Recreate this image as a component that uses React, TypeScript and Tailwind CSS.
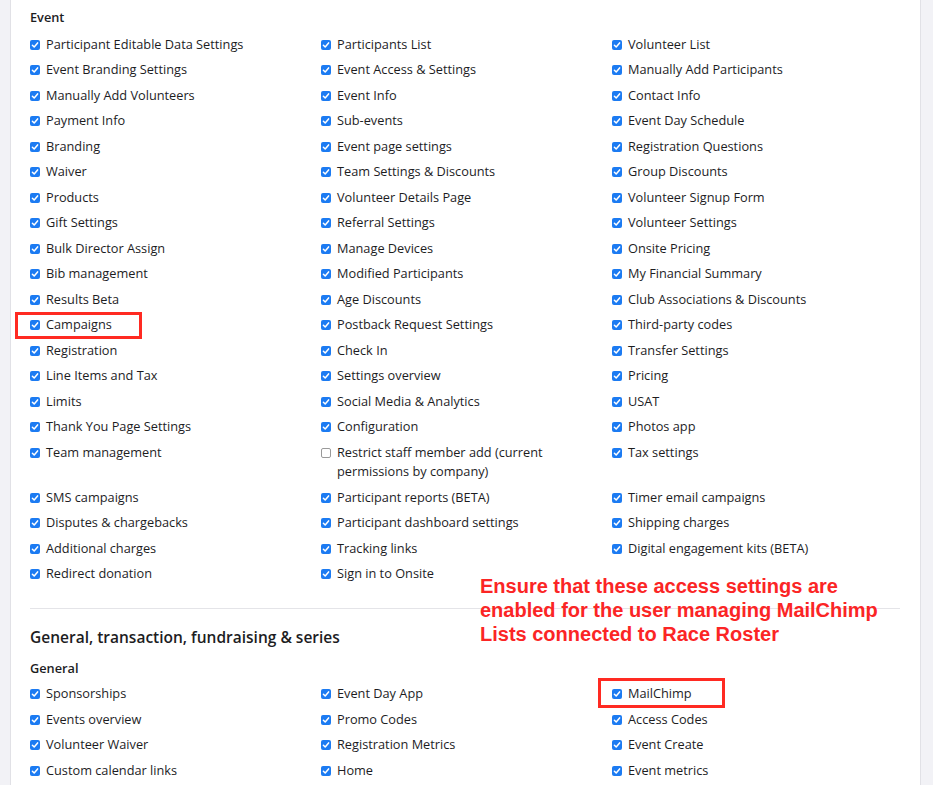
import React from "react";

type Item = { label: string; checked?: boolean; mark?: "campaigns" | "mailchimp" };

const eventRows: (Item | null)[][] = [
  [{ label: "Participant Editable Data Settings" }, { label: "Participants List" }, { label: "Volunteer List" }],
  [{ label: "Event Branding Settings" }, { label: "Event Access & Settings" }, { label: "Manually Add Participants" }],
  [{ label: "Manually Add Volunteers" }, { label: "Event Info" }, { label: "Contact Info" }],
  [{ label: "Payment Info" }, { label: "Sub-events" }, { label: "Event Day Schedule" }],
  [{ label: "Branding" }, { label: "Event page settings" }, { label: "Registration Questions" }],
  [{ label: "Waiver" }, { label: "Team Settings & Discounts" }, { label: "Group Discounts" }],
  [{ label: "Products" }, { label: "Volunteer Details Page" }, { label: "Volunteer Signup Form" }],
  [{ label: "Gift Settings" }, { label: "Referral Settings" }, { label: "Volunteer Settings" }],
  [{ label: "Bulk Director Assign" }, { label: "Manage Devices" }, { label: "Onsite Pricing" }],
  [{ label: "Bib management" }, { label: "Modified Participants" }, { label: "My Financial Summary" }],
  [{ label: "Results Beta" }, { label: "Age Discounts" }, { label: "Club Associations & Discounts" }],
  [{ label: "Campaigns", mark: "campaigns" }, { label: "Postback Request Settings" }, { label: "Third-party codes" }],
  [{ label: "Registration" }, { label: "Check In" }, { label: "Transfer Settings" }],
  [{ label: "Line Items and Tax" }, { label: "Settings overview" }, { label: "Pricing" }],
  [{ label: "Limits" }, { label: "Social Media & Analytics" }, { label: "USAT" }],
  [{ label: "Thank You Page Settings" }, { label: "Configuration" }, { label: "Photos app" }],
  [
    { label: "Team management" },
    { label: "Restrict staff member add (current permissions by company)", checked: false },
    { label: "Tax settings" },
  ],
  [{ label: "SMS campaigns" }, { label: "Participant reports (BETA)" }, { label: "Timer email campaigns" }],
  [{ label: "Disputes & chargebacks" }, { label: "Participant dashboard settings" }, { label: "Shipping charges" }],
  [{ label: "Additional charges" }, { label: "Tracking links" }, { label: "Digital engagement kits (BETA)" }],
  [{ label: "Redirect donation" }, { label: "Sign in to Onsite" }, null],
];

const generalRows: (Item | null)[][] = [
  [{ label: "Sponsorships" }, { label: "Event Day App" }, { label: "MailChimp", mark: "mailchimp" }],
  [{ label: "Events overview" }, { label: "Promo Codes" }, { label: "Access Codes" }],
  [{ label: "Volunteer Waiver" }, { label: "Registration Metrics" }, { label: "Event Create" }],
  [{ label: "Custom calendar links" }, { label: "Home" }, { label: "Event metrics" }],
];

function Box({ checked }: { checked: boolean }) {
  if (!checked) {
    return (
      <span className="mt-[5px] h-[10px] w-[10px] shrink-0 rounded-[2px] border border-[#9a9a9a] bg-white" />
    );
  }
  return (
    <span className="mt-[5px] flex h-[10px] w-[10px] shrink-0 items-center justify-center rounded-[2px] bg-[#1c7bf2]">
      <svg viewBox="0 0 10 10" className="h-[10px] w-[10px]">
        <path d="M2.4 5.2 L4.2 7 L7.6 2.9" fill="none" stroke="white" strokeWidth="1.5" strokeLinecap="round" strokeLinejoin="round" />
      </svg>
    </span>
  );
}

function Cell({ item }: { item: Item | null }) {
  if (!item) return <div />;
  return (
    <div className="relative flex items-start gap-[6px] pr-5">
      <Box checked={item.checked !== false} />
      <span>{item.label}</span>
      {item.mark === "campaigns" && (
        <span className="pointer-events-none absolute left-[-15px] top-[-3px] h-[27px] w-[127px] border-[3px] border-[#ff2a22]" />
      )}
      {item.mark === "mailchimp" && (
        <span className="pointer-events-none absolute left-[-14px] top-[-6px] h-[30px] w-[127px] border-[3px] border-[#ff2a22]" />
      )}
    </div>
  );
}

function Grid({ rows }: { rows: (Item | null)[][] }) {
  return (
    <div className="grid grid-cols-[291px_291px_1fr] gap-y-[6px]">
      {rows.map((row, i) =>
        row.map((item, j) => <Cell key={`${i}-${j}`} item={item} />)
      )}
    </div>
  );
}

export default function App() {
  return (
    <div className="flex h-[785px] w-[933px] overflow-hidden bg-[#f2f2f6] text-[12.75px] leading-[19.5px] text-[#1d1d1f] [font-family:'Open_Sans',sans-serif]">
      <div className="w-[10px] shrink-0" />
      <div className="relative w-[911px] shrink-0 border-x border-[#e1e1e6] bg-white pl-[19px] pr-[20px] pt-[8px]">
        <div className="mb-[7px] font-semibold">Event</div>
        <Grid rows={eventRows} />
        <div className="mt-[24px] h-px bg-[#e4e4e8]" />
        <div className="mt-[16px] text-[15.5px] font-semibold leading-[24px]">
          General, transaction, fundraising &amp; series
        </div>
        <div className="mb-[6px] mt-[10px] font-semibold">General</div>
        <Grid rows={generalRows} />

        <div className="absolute left-[469px] top-[574px] text-[20px] font-bold leading-[24px] text-[#fb2525] [font-family:'Liberation_Sans',Arial,sans-serif]">
          Ensure that these access settings are
          <br />
          enabled for the user managing MailChimp
          <br />
          Lists connected to Race Roster
        </div>
      </div>
    </div>
  );
}
